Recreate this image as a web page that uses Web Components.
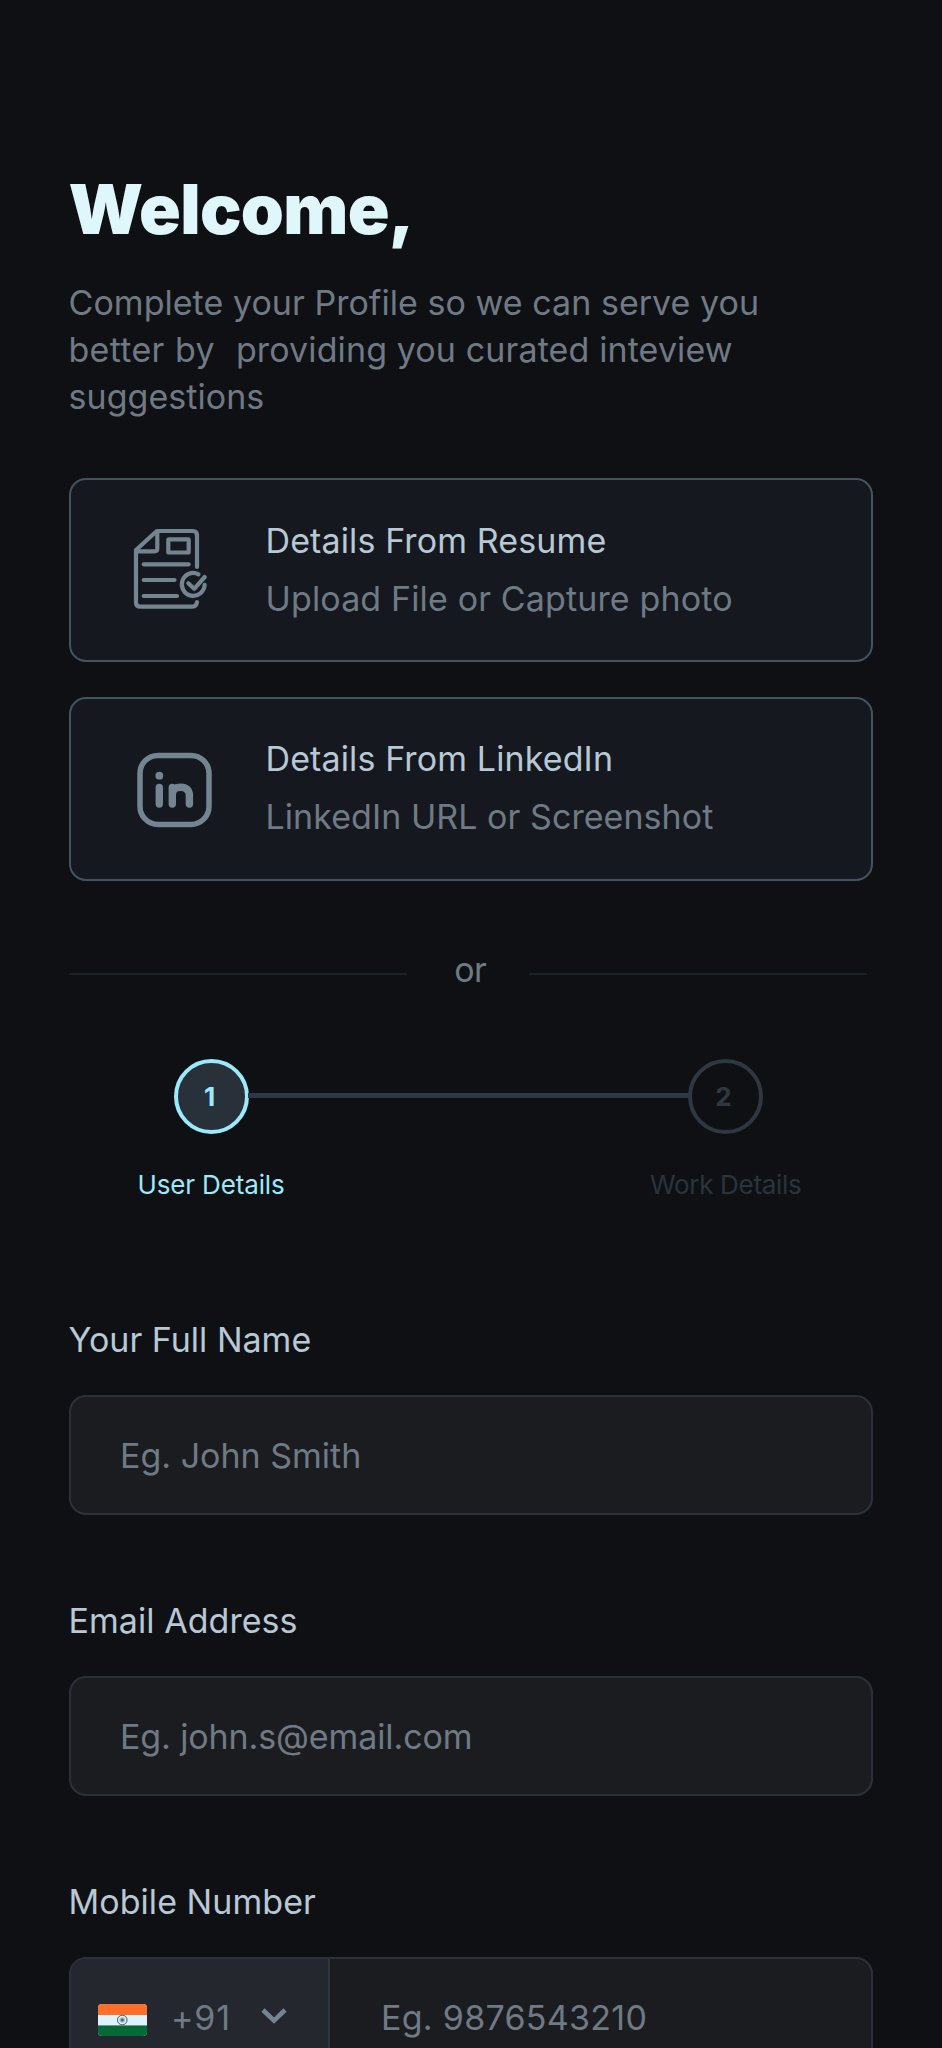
<!DOCTYPE html>
<html lang="en">
<head>
<meta charset="utf-8">
<title>Complete your profile</title>
<style>
  html { background: #0f1014; }
  body { margin: 0; height: 2048px; overflow: hidden; background: #0f1014; font-family: Inter, "Liberation Sans", sans-serif; }
</style>
</head>
<body>
<profile-page>
  <welcome-header heading="Welcome,">Complete your Profile so we can serve you<br><span style="letter-spacing:.3px;word-spacing:.6px">better by&nbsp; </span><span style="letter-spacing:.12px">providing you curated inteview</span><br>suggestions</welcome-header>
  <source-card label="Details From Resume" hint="Upload File or Capture photo" style="--label-spacing:.12px;--hint-spacing:.14px">
    <resume-icon slot="icon"></resume-icon>
  </source-card>
  <source-card label="Details From LinkedIn" hint="LinkedIn URL or Screenshot" style="--label-spacing:.12px;--hint-spacing:.06px;--text-offset:.3px">
    <linkedin-icon slot="icon"></linkedin-icon>
  </source-card>
  <or-divider>or</or-divider>
  <progress-steps></progress-steps>
  <form-field label="Your Full Name">Eg. John Smith</form-field>
  <form-field label="Email Address" style="--label-spacing:.05px"><span style="letter-spacing:-.11px">Eg. john.s@email.com</span></form-field>
  <form-field label="Mobile Number" style="--label-spacing:.05px">
    <country-code slot="prefix">+91</country-code>
    <span style="letter-spacing:.28px;margin-left:1.5px">Eg. 9876543210</span>
  </form-field>
</profile-page>

<script>
function define(name, html) {
  const template = document.createElement('template');
  template.innerHTML = html;
  customElements.define(name, class extends HTMLElement {
    constructor() {
      super();
      this.attachShadow({ mode: 'open' }).append(template.content.cloneNode(true));
    }
    connectedCallback() {
      for (const node of this.shadowRoot.querySelectorAll('[data-attr]'))
        node.textContent = this.getAttribute(node.dataset.attr) || '';
    }
  });
}

define('profile-page', `
  <style>
    :host { display: flex; flex-direction: column; box-sizing: border-box; width: 942px; height: 2048px; overflow: hidden; padding: 166.6px 68.5px 0; font-size: 34px; color: #6f7a84; }
    ::slotted(*) { flex: none; }
  </style>
  <slot></slot>`);

define('welcome-header', `
  <style>
    :host { display: block; height: 311.4px; }
    h1 { margin: 0 0 28.3px; font-size: 69px; line-height: 84px; font-weight: 900; color: #dff6fb; letter-spacing: -.7px; }
    p { margin: 0; line-height: 47.2px; letter-spacing: .04px; }
  </style>
  <h1 data-attr="heading"></h1>
  <p><slot></slot></p>`);

define('source-card', `
  <style>
    :host { display: flex; box-sizing: border-box; width: 804.5px; height: 184.4px; margin-bottom: 34.2px; padding-top: 31.4px; border: 2px solid #43545f; border-radius: 17px; background: #15181f; }
    .icon { width: 195px; flex: none; }
    .text { line-height: 58px; padding-top: var(--text-offset, 1px); }
    .label { color: #b8c8d5; letter-spacing: var(--label-spacing, 0); }
    .hint { letter-spacing: var(--hint-spacing, 0); }
  </style>
  <div class="icon"><slot name="icon"></slot></div>
  <div class="text"><div class="label" data-attr="label"></div><div class="hint" data-attr="hint"></div></div>`);

define('resume-icon', `
  <style>:host { display: block; margin: 13.6px 0 0 59.5px; } svg { display: block; }</style>
  <svg width="80" height="90" viewBox="130 525 80 90" fill="none" stroke="#748592" stroke-width="4.2" stroke-linecap="round" stroke-linejoin="round">
    <path d="M197 567V535.2Q197 531 192.5 531H156.8L136 550V602.5Q136 606.7 140.3 606.7H192.5Q196.4 606.7 197 602"/>
    <path d="M157.3 532V548.5Q157.3 551.3 154.5 551.3H137"/>
    <rect x="168.3" y="539.3" width="20.4" height="13.2" rx=".6"/>
    <path d="M143.7 564.3H188.7M143.7 580H174.5M143.7 596H177"/>
    <path d="M198.5 574.3A11.4 11.4 0 1 0 204.6 584.8"/>
    <path d="M188.3 583.2L194.2 588.8L204.7 577"/>
  </svg>`);

define('linkedin-icon', `
  <style>:host { display: block; margin: 15px 0 0 59.5px; } svg { display: block; }</style>
  <svg width="90" height="90" viewBox="130 745 90 90" fill="none" stroke="#748592">
    <rect x="140" y="755.4" width="69" height="69" rx="18" stroke-width="5.5"/>
    <circle cx="159.3" cy="775.7" r="3.9" fill="#748592" stroke="none"/>
    <path stroke-width="7.4" stroke-linecap="round" d="M159.3 787.4V804M172.3 787.4V804M172.3 795.5C172.3 789.5 175.5 787.2 180.8 787.2S189.4 790 189.4 795.5V804"/>
  </svg>`);

define('or-divider', `
  <style>
    :host { display: flex; align-items: center; justify-content: space-between; width: 798.5px; height: 58px; margin-top: 25.8px; }
    i { width: 338.5px; height: 2px; margin-top: 7.6px; background: #1b2126; }
    span { padding-left: 5px; letter-spacing: -.5px; }
  </style>
  <i></i><span><slot></slot></span><i></i>`);

define('progress-steps', `
  <style>
    :host { display: block; height: 252px; margin: 59.8px 0 0 105px; width: 589px; }
    .track { display: flex; align-items: center; }
    .dot { box-sizing: border-box; flex: none; width: 75px; height: 75px; border: 4.3px solid #2f3842; border-radius: 50%; font-size: 26px; line-height: 67px; padding-right: 3px; text-align: center; font-weight: 700; color: #2f3842; }
    .dot.on { background: #283039; border-color: #9be9fa; color: #9be9fa; }
    .bar { flex: 1; height: 4.6px; margin: -1px -1px 0; background: #2f3842; }
    .labels { display: flex; justify-content: space-between; margin: 35px -39px 0 -36px; font-size: 26px; line-height: 32px; color: #2b333c; }
    .labels .on { color: #9be9fa; letter-spacing: -.15px; }
    .labels span + span { letter-spacing: -.3px; }
  </style>
  <div class="track"><div class="dot on">1</div><div class="bar"></div><div class="dot">2</div></div>
  <div class="labels"><span class="on">User Details</span><span>Work Details</span></div>`);

define('form-field', `
  <style>
    :host { display: block; height: 281px; }
    label { display: block; height: 84.2px; line-height: 58px; color: #b8c8d5; letter-spacing: var(--label-spacing, 0); }
    .box { display: flex; box-sizing: border-box; width: 804.5px; height: 120px; border: 2px solid #2a3239; border-radius: 17px; background: #1b1c20; line-height: 118px; overflow: hidden; }
    .value { padding-left: 49.5px; }
  </style>
  <label data-attr="label"></label>
  <div class="box"><slot name="prefix"></slot><div class="value"><slot></slot></div></div>`);

define('country-code', `
  <style>
    :host { display: flex; box-sizing: border-box; flex: none; width: 259.5px; border-right: 2px solid #2e363e; background: #24272e; }
    .flag { flex: none; margin: 45px 0 0 27.4px; }
    .code { width: 62px; margin-left: 24.1px; letter-spacing: .8px; }
    .chevron { margin: 45.4px 0 0 27.2px; }
    svg { display: block; flex: none; }
  </style>
  <svg class="flag" width="49" height="32" viewBox="0 0 49 32">
    <defs><clipPath id="c"><rect width="49" height="32" rx="4"/></clipPath></defs>
    <g clip-path="url(#c)">
      <rect width="49" height="32" fill="#dcf4fb"/>
      <rect width="49" height="11" fill="#ff6f29"/>
      <rect y="21" width="49" height="1" fill="#71968f"/>
      <rect y="22" width="49" height="10" fill="#046a38"/>
    </g>
    <circle cx="24.3" cy="16" r="4.8" fill="none" stroke="#4f5b68" stroke-width="1"/>
    <circle cx="24.3" cy="16" r="2.8" fill="#a4b4be"/>
    <circle cx="24.3" cy="16" r="1.3" fill="#4f5b68"/>
  </svg>
  <span class="code"><slot></slot></span>
  <svg class="chevron" width="28" height="24" viewBox="260 2004 28 24" fill="none" stroke="#748592" stroke-width="4.6"><path d="M263 2010L274 2020.6L285 2010"/></svg>`);
</script>
</body>
</html>
